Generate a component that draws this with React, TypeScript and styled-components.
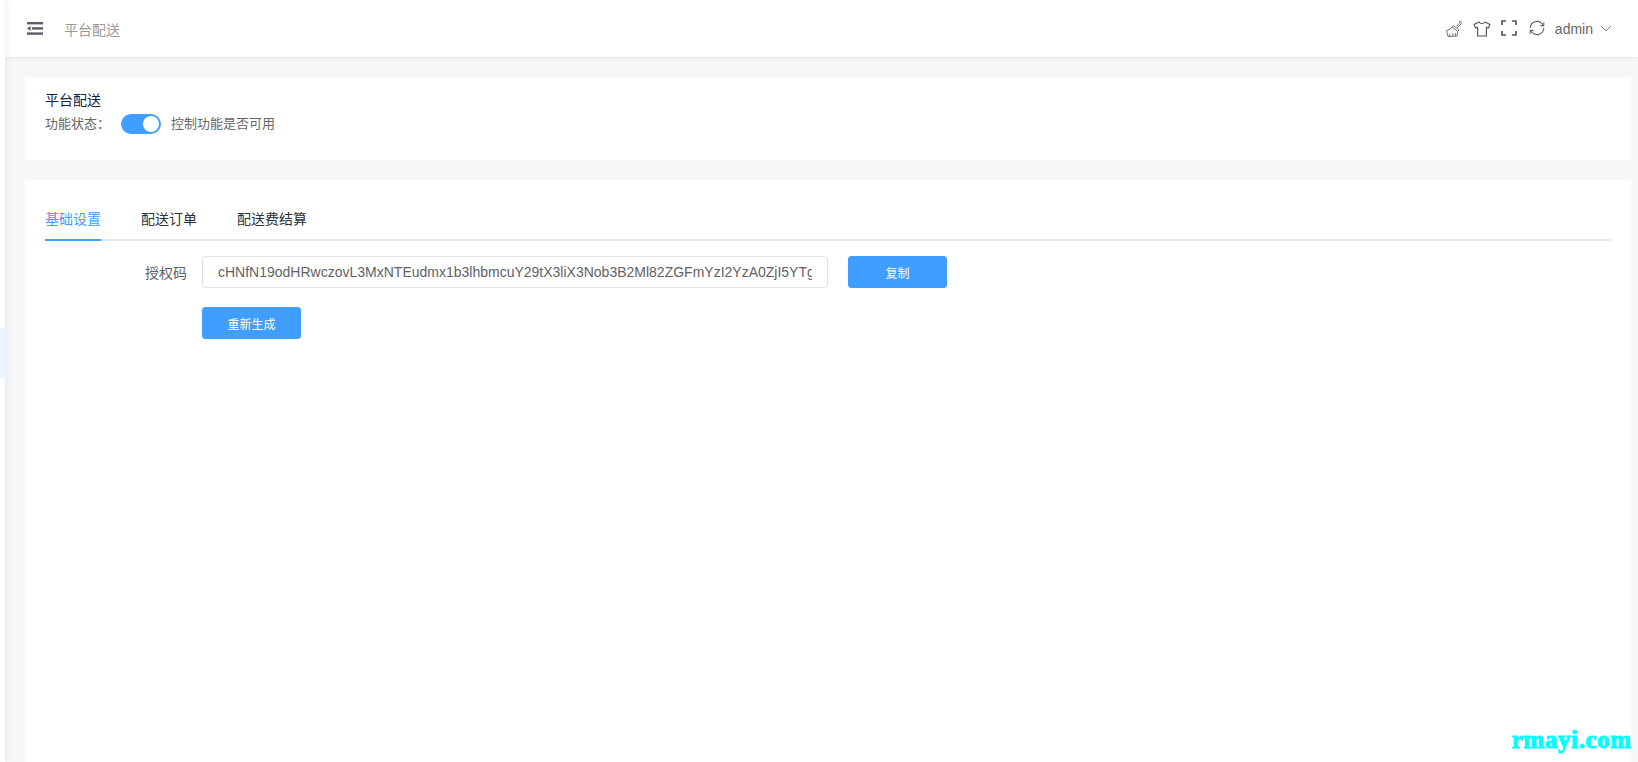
import React from "react";
import styled, { createGlobalStyle } from "styled-components";

const GlobalStyle = createGlobalStyle`
  html, body {
    margin: 0;
    padding: 0;
    height: 100%;
    overflow: hidden;
    background: #f5f7f9;
    font-family: "Liberation Sans", "Noto Sans CJK SC", sans-serif;
  }
`;

const Page = styled.div`
  display: flex;
  width: 1638px;
  height: 762px;
  overflow: hidden;
`;

const SideRail = styled.aside`
  width: 5px;
  flex-shrink: 0;
  background: #fff;
  box-shadow: 1px 0 6px rgba(0, 21, 41, 0.08);
  padding-top: 328px;
  position: relative;
  z-index: 2;
`;

const RailActive = styled.div`
  height: 50px;
  background: #e8f4ff;
`;

const Main = styled.div`
  flex: 1;
  min-width: 0;
  display: flex;
  flex-direction: column;
`;

const Header = styled.header`
  height: 57px;
  flex-shrink: 0;
  background: #fff;
  box-shadow: 0 1px 4px rgba(0, 21, 41, 0.08);
  display: flex;
  align-items: center;
  justify-content: space-between;
  padding: 0 26px 0 22px;
  position: relative;
  z-index: 1;
`;

const HeaderLeft = styled.div`
  display: flex;
  align-items: center;
  gap: 21px;
`;

const Crumb = styled.span`
  font-size: 14px;
  color: #97a8be;
  color: #999;
`;

const HeaderRight = styled.div`
  display: flex;
  align-items: center;
`;

const IconSlot = styled.span`
  display: flex;
  width: 18px;
  height: 18px;
  margin-right: 10px;
  color: #5a5e66;
`;

const UserName = styled.span`
  font-size: 14px;
  color: #666;
  margin-left: -2px;
  margin-right: 7px;
`;

const Content = styled.main`
  flex: 1;
  display: flex;
  flex-direction: column;
  gap: 20px;
  padding: 20px 7px 0 20px;
  min-height: 0;
`;

const StatusCard = styled.section`
  height: 83px;
  flex-shrink: 0;
  box-sizing: border-box;
  background: #fff;
  padding: 13px 20px 0;
`;

const CardTitle = styled.div`
  font-size: 14px;
  line-height: 20px;
  color: #17233d;
  margin-bottom: 4px;
`;

const StatusRow = styled.div`
  display: flex;
  align-items: center;
  font-size: 13px;
  color: #666;
  line-height: 20px;
`;

const Toggle = styled.span`
  width: 40px;
  height: 20px;
  border-radius: 10px;
  background: #409eff;
  margin: 0 10px 0 11px;
  position: relative;
  flex-shrink: 0;

  &::after {
    content: "";
    position: absolute;
    top: 2px;
    right: 2px;
    width: 16px;
    height: 16px;
    border-radius: 50%;
    background: #fff;
  }
`;

const SettingsCard = styled.section`
  flex: 1;
  background: #fff;
  padding: 20px 20px 0;
  min-height: 0;
`;

const Tabs = styled.div`
  display: flex;
  gap: 40px;
  height: 39px;
  box-sizing: content-box;
  border-bottom: 2px solid #e4e7ed;
  margin-top: 0;
`;

const Tab = styled.div<{ $active?: boolean }>`
  height: 39px;
  line-height: 39px;
  margin-top: 0;
  font-size: 14px;
  color: ${(p) => (p.$active ? "#409eff" : "#303133")};
  box-shadow: ${(p) => (p.$active ? "0 2px 0 #409eff" : "none")};
`;

const FormRow = styled.div`
  display: flex;
  align-items: center;
  margin-top: 15px;
`;

const FieldLabel = styled.label`
  width: 142px;
  padding-right: 15px;
  box-sizing: border-box;
  margin-left: 15px;
  text-align: right;
  font-size: 14px;
  color: #606266;
`;

const CodeInput = styled.input`
  width: 626px;
  height: 32px;
  box-sizing: border-box;
  border: 1px solid #dcdfe6;
  border-radius: 4px;
  padding: 0 15px;
  font-family: inherit;
  font-size: 14px;
  color: #606266;
  outline: none;
`;

const PrimaryButton = styled.button`
  width: 99px;
  height: 32px;
  border: 1px solid #409eff;
  border-radius: 3px;
  background: #409eff;
  color: #fff;
  font-family: inherit;
  font-size: 12px;
  padding: 0;
`;

const CopyButton = styled(PrimaryButton)`
  margin-left: 20px;
`;

const ActionRow = styled.div`
  margin: 19px 0 0 157px;
`;

const Watermark = styled.div`
  position: fixed;
  right: 6px;
  bottom: 7px;
  font-family: "Liberation Serif", serif;
  font-weight: 700;
  font-size: 25px;
  line-height: 30px;
  letter-spacing: 0.6px;
  color: #00ffff;
  -webkit-text-stroke: 1px #00ffff;
  z-index: 5;
`;

const MenuIcon = () => (
  <svg width="16" height="13" viewBox="0 0 16 13" fill="#5a5e66">
    <rect x="0" y="0" width="16" height="2.4" />
    <rect x="5" y="5.2" width="11" height="2.4" />
    <rect x="0" y="10.4" width="16" height="2.4" />
    <path d="M0 6.4 L3.6 4 V8.8 Z" />
  </svg>
);

const BrushIcon = () => (
  <svg width="18" height="18" viewBox="0 0 18 18" fill="none" stroke="#6b7385" strokeWidth="1">
    <path d="M16 1.5 L11.5 6.5 M14 1 L16.8 3.2 L12.6 7.6" />
    <path d="M8.4 5.6 L14 10 L12.6 11.4 L7 7 Z" />
    <path d="M7 7 C5.5 9 3.5 10 1.5 10.6 L3 16.5 L12 16 L12.8 11.4" />
    <path d="M5 16.3 L4.5 13.6 M8 16.2 L7.6 13.2 M10.6 16 L10.2 13" />
  </svg>
);

const ShirtIcon = () => (
  <svg width="18" height="18" viewBox="0 0 18 18" fill="none" stroke="#4a4f5c" strokeWidth="1.1" strokeLinejoin="round">
    <path d="M6 2 C7 4 11 4 12 2 L17 4.4 L15.4 8 L13.4 7.2 V16 H4.6 V7.2 L2.6 8 L1 4.4 Z" />
  </svg>
);

const FullscreenIcon = () => (
  <svg width="16" height="16" viewBox="0 0 16 16" fill="none" stroke="#4f5666" strokeWidth="1.7">
    <path d="M1 5 V1 H5 M11 1 H15 V5 M15 11 V15 H11 M5 15 H1 V11" />
  </svg>
);

const RefreshIcon = () => (
  <svg width="16" height="16" viewBox="0 0 16 16" fill="none" stroke="#5f6675" strokeWidth="1.1">
    <path d="M1.2 8 A6.8 6.8 0 0 1 13 3.6 L14.6 5.4" />
    <path d="M14.8 2.2 V5.6 H11.4" />
    <path d="M14.8 8 A6.8 6.8 0 0 1 3 12.4 L1.4 10.6" />
    <path d="M1.2 13.8 V10.4 H4.6" />
  </svg>
);

const Chevron = () => (
  <svg width="12" height="7" viewBox="0 0 12 7" fill="none" stroke="#888" strokeWidth="1">
    <path d="M1 1 L6 6 L11 1" />
  </svg>
);

const authCode =
  "cHNfN19odHRwczovL3MxNTEudmx1b3lhbmcuY29tX3liX3Nob3B2Ml82ZGFmYzI2YzA0ZjI5YTg2ZjVmMTIzNDU2Nzg5";

export default function App() {
  return (
    <>
      <GlobalStyle />
      <Page>
        <SideRail>
          <RailActive />
        </SideRail>
        <Main>
          <Header>
            <HeaderLeft>
              <MenuIcon />
              <Crumb>平台配送</Crumb>
            </HeaderLeft>
            <HeaderRight>
              <IconSlot><BrushIcon /></IconSlot>
              <IconSlot><ShirtIcon /></IconSlot>
              <IconSlot><FullscreenIcon /></IconSlot>
              <IconSlot><RefreshIcon /></IconSlot>
              <UserName>admin</UserName>
              <Chevron />
            </HeaderRight>
          </Header>
          <Content>
            <StatusCard>
              <CardTitle>平台配送</CardTitle>
              <StatusRow>
                功能状态：
                <Toggle />
                控制功能是否可用
              </StatusRow>
            </StatusCard>
            <SettingsCard>
              <Tabs>
                <Tab $active>基础设置</Tab>
                <Tab>配送订单</Tab>
                <Tab>配送费结算</Tab>
              </Tabs>
              <FormRow>
                <FieldLabel>授权码</FieldLabel>
                <CodeInput readOnly value={authCode} />
                <CopyButton>复制</CopyButton>
              </FormRow>
              <ActionRow>
                <PrimaryButton>重新生成</PrimaryButton>
              </ActionRow>
            </SettingsCard>
          </Content>
        </Main>
      </Page>
      <Watermark>rmayi.com</Watermark>
    </>
  );
}
